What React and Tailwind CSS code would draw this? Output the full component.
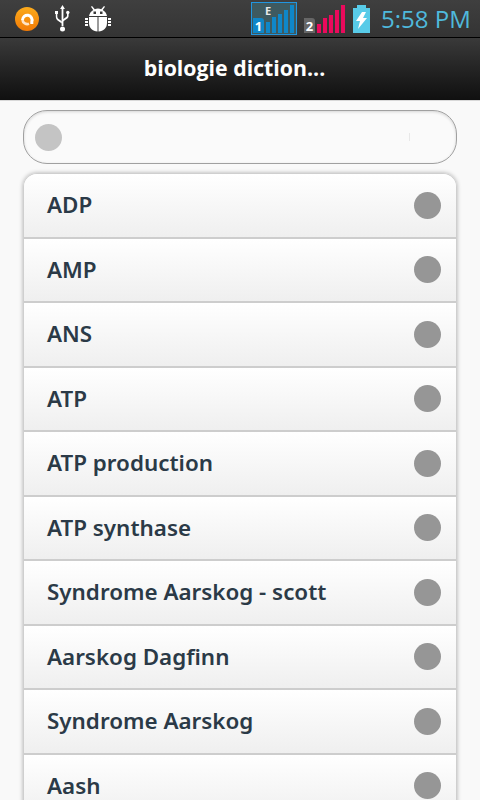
const terms = [
  'ADP',
  'AMP',
  'ANS',
  'ATP',
  'ATP production',
  'ATP synthase',
  'Syndrome Aarskog - scott',
  'Aarskog Dagfinn',
  'Syndrome Aarskog',
  'Aash',
]

function AppIcon() {
  return (
    <svg width="24" height="24" viewBox="0 0 24 24">
      <defs>
        <linearGradient id="orange" x1="0" y1="0" x2="0" y2="1">
          <stop offset="0" stopColor="#fbab1c" />
          <stop offset="1" stopColor="#f27a05" />
        </linearGradient>
      </defs>
      <circle cx="12" cy="12" r="12" fill="url(#orange)" />
      <path d="M7.500 13a4.800 4.800 0 1 1 9.300 1.700V17" fill="none" stroke="#fff" strokeWidth="3" />
      <path d="M7.500 13a4.800 4.800 0 0 0 6.500 3.800" fill="none" stroke="#ffe3c4" strokeWidth="2.600" />
    </svg>
  )
}

function UsbIcon() {
  return (
    <svg width="15" height="27" viewBox="0 0 15 27" fill="#fff">
      <path d="M7.500 0l2.400 4H8.400v17H6.600V4H5.100z" />
      <circle cx="7.500" cy="24" r="2.500" />
      <path d="M0 6h3v3h-.7v2.500c0 1.600 .9 2.200 2 2.900l2.500 1.800v2.200l-3.500-2.500C1.800 15 .8 14 .8 11.500V9H0z" />
      <circle cx="12.800" cy="7.500" r="1.700" />
      <path d="M12 8h1.600v2.800c0 1.800-.9 2.500-2 3.300L8 16.400v-2.200l2.800-1.900c.9-.6 1.200-1 1.200-2z" />
    </svg>
  )
}

function BugIcon() {
  return (
    <svg width="26" height="26" viewBox="0 0 26 26" fill="#fff">
      <path d="M7 0l2.800 3.200a8.800 8.800 0 0 1 6.400 0L19 0l1 .8-2.300 3.100A8.800 8.800 0 0 1 22 10H4a8.800 8.800 0 0 1 4.300-6.100L6 .8z" />
      <path d="M4 11h8.500v14.500C7.500 25.200 4 22 4 17z" />
      <path d="M13.500 11H22v6c0 5-3.500 8.200-8.500 8.500z" />
      <rect x="0" y="12" width="3" height="2" />
      <rect x="0" y="15" width="3" height="2" />
      <rect x="0" y="18" width="3" height="2" />
      <rect x="23" y="12" width="3" height="2" />
      <rect x="23" y="15" width="3" height="2" />
      <rect x="23" y="18" width="3" height="2" />
      <rect x="8.500" y="5.500" width="2.500" height="2.500" fill="#3a3a3a" />
      <rect x="15" y="5.500" width="2.500" height="2.500" fill="#3a3a3a" />
    </svg>
  )
}

function SignalBars({ color, heights }) {
  return (
    <div className="flex items-end gap-[2px]">
      {heights.map((h, i) => (
        <div key={i} className={`w-[4px] ${color}`} style={{ height: h }} />
      ))}
    </div>
  )
}

function StatusBar() {
  return (
    <div className="flex h-[37px] shrink-0 items-center bg-gradient-to-b from-[#3f3f3f] to-[#343434]">
      <div className="ml-[15px] flex"><AppIcon /></div>
      <div className="ml-[16px] flex"><UsbIcon /></div>
      <div className="ml-[15px] flex"><BugIcon /></div>
      <div className="relative ml-[140px] mt-[2px] flex h-[33px] w-[46px] items-end justify-end self-start border border-[#2196e0] bg-[#3e5a60] pb-[1px] pr-[2px]">
        <span className="absolute left-[13px] top-[1px] text-[11px] font-bold leading-[13px] text-[#e8e8e8]">E</span>
        <div className="absolute bottom-[1px] left-[1px] h-[15px] w-[11px] rounded-tr-[3px] bg-[#0f87c9] text-center text-[13px] font-bold leading-[16px] text-white">1</div>
        <SignalBars color="bg-[#0f87c9]" heights={[11, 16, 19, 23, 28]} />
      </div>
      <div className="ml-[7px] flex items-end self-end pb-[4px]">
        <div className="mr-[2px] h-[15px] w-[11px] rounded-tr-[3px] bg-[#666666] text-center text-[13px] font-bold leading-[16px] text-white">2</div>
        <SignalBars color="bg-[#ea0a5c]" heights={[9, 15, 18, 23, 28]} />
      </div>
      <div className="ml-[8px] flex flex-col items-center self-end pb-[4px]">
        <div className="h-[3px] w-[9px] bg-[#58cbe8]" />
        <div className="flex h-[25px] w-[17px] items-center justify-center bg-[#58cbe8]">
          <svg width="11" height="17" viewBox="0 0 11 17" fill="#fff">
            <path d="M6 0h4L7 6h4L2 17l2-8H0z" />
          </svg>
        </div>
      </div>
      <span className="ml-[11px] whitespace-nowrap text-[24px] leading-none text-[#4fb9dc]">5:58 PM</span>
    </div>
  )
}

function Row({ label }) {
  return (
    <div className="flex h-[64.500px] shrink-0 items-center justify-between border-b-2 border-[#cdcdcd] bg-gradient-to-b from-white to-[#efefef] pl-[23px] pr-[15px]">
      <span className="font-['Noto_Sans',sans-serif] text-[22.400px] font-semibold text-[#2b3a47]">{label}</span>
      <div className="h-[27px] w-[27px] rounded-full bg-[#969696]" />
    </div>
  )
}

export default function App() {
  return (
    <div className="flex h-[800px] flex-col overflow-hidden bg-[#f9f9f9] font-['Open_Sans',sans-serif]">
      <StatusBar />
      <div className="h-px shrink-0 bg-black" />
      <div className="flex h-[62px] shrink-0 items-center justify-center bg-gradient-to-b from-[#3a3a3a] to-[#101010] pb-[2px] pr-[11px] text-[21.300px] font-bold text-white">
        biologie diction...
      </div>
      <div className="h-px shrink-0 bg-[#d8d8d8]" />
      <div className="flex flex-col px-[23px] pt-[9px]">
        <div className="flex h-[54px] shrink-0 items-center rounded-[24px] border border-[#a0a0a0] bg-[#fafafa] pl-[11px] shadow-[inset_0_1px_3px_rgba(0,0,0,0.15)]">
          <div className="h-[27px] w-[27px] rounded-full bg-[#c4c4c4]" />
          <div className="ml-auto mr-[46px] h-[8px] w-px bg-[#e8e8e8]" />
        </div>
        <div className="mt-[9px] flex flex-col overflow-hidden rounded-t-[14px] border-x border-t border-[#cfcfcf] shadow-[0_0_4px_rgba(0,0,0,0.3)]">
          {terms.map((t) => (
            <Row key={t} label={t} />
          ))}
        </div>
      </div>
    </div>
  )
}
